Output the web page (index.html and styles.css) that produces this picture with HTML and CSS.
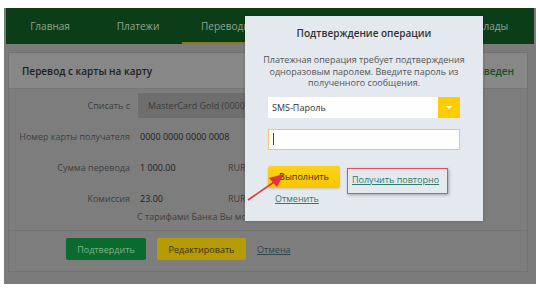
FILE: index.html
```html
<!DOCTYPE html>
<html lang="ru">
<head>
    <meta charset="UTF-8">
    <meta name="viewport" content="width=device-width, initial-scale=1.0">
    <title>Перевод с карты на карту</title>
    <link rel="stylesheet" href="styles.css">
</head>
<body>
    <div class="screen">
        <!-- Меню -->
        <nav class="topnav">
            <a class="tab">Главная</a>
            <a class="tab">Платежи</a>
            <a class="tab active">Переводы</a>
            <a class="tab"></a>
            <a class="tab"></a>
            <a class="tab">Вклады</a>
        </nav>

        <!-- Форма перевода (под затемнением) -->
        <div class="panel">
            <div class="panel-head">
                <span>Перевод с карты на карту</span>
                <span class="status">Введен</span>
            </div>
            <div class="panel-body">
                <div class="row">
                    <span class="label">Списать с</span>
                    <span class="select-dark">MasterCard Gold (0000 1</span>
                </div>
                <div class="row">
                    <span class="label">Номер карты получателя</span>
                    <span class="value">0000 0000 0000 0008</span>
                </div>
                <div class="row">
                    <span class="label">Сумма перевода</span>
                    <span class="value amount">1 000.00</span>
                    <span class="currency">RUR</span>
                </div>
                <div class="row">
                    <span class="label">Комиссия</span>
                    <span class="value amount">23.00</span>
                    <span class="currency">RUR</span>
                </div>
                <div class="tariffs">С тарифами Банка Вы мо</div>
            </div>
            <div class="panel-foot">
                <button class="btn btn-green">Подтвердить</button>
                <button class="btn btn-olive">Редактировать</button>
                <a class="link-dark">Отмена</a>
            </div>
        </div>

        <!-- Окно подтверждения -->
        <div class="modal">
            <div class="modal-title">Подтверждение операции</div>
            <p class="modal-text">Платежная операция требует подтверждения<br>одноразовым паролем. Введите пароль из<br>полученного сообщения.</p>
            <div class="select">
                <span>SMS-Пароль</span>
                <span class="select-btn"><span class="caret"></span></span>
            </div>
            <div class="input"><span class="cursor"></span></div>
            <div class="actions">
                <button class="btn btn-yellow">Выполнить</button>
                <span class="mark"><a class="link">Получить повторно</a></span>
            </div>
            <a class="link cancel">Отменить</a>
        </div>

        <svg class="arrow" width="532" height="276" viewBox="0 0 532 276">
            <line x1="244" y1="192" x2="273" y2="172" stroke="#e2333b" stroke-width="1.6"/>
            <polygon points="280,166 265,170 273,179" fill="#e2333b"/>
        </svg>
    </div>
</body>
</html>
```

FILE: styles.css
```css
/* Базовые стили */
body {
    margin: 0;
    background-color: #ffffff;
    font-family: 'Open Sans', 'DejaVu Sans', sans-serif;
}

.screen {
    position: relative;
    width: 528px;
    height: 276px;
    margin: 8px 4px 0 4px;
    padding: 0 2px;
    background-color: #7b7b7b;
}

/* Меню */
.topnav {
    display: flex;
    height: 36px;
    background-color: #0b3e18;
}

.tab {
    position: relative;
    width: 90px;
    text-align: center;
    line-height: 36px;
    font-size: 10px;
    color: #8fa593;
}

.tab.active::after {
    content: "";
    position: absolute;
    left: 0;
    right: 0;
    bottom: 0;
    height: 2px;
    background-color: #8c7a12;
}

/* Панель формы */
.panel {
    width: 518px;
    height: 218px;
    margin: 8px 0 0 2px;
    border: 1px solid #727272;
    background-color: #7d7d7d;
}

.panel-head {
    display: flex;
    justify-content: space-between;
    align-items: center;
    height: 35px;
    padding: 0 13px 0 13px;
    background-color: #878787;
    border-bottom: 1px solid #767676;
    font-size: 10px;
    font-weight: 600;
    color: #1e1e1e;
}

.panel-head .status {
    color: #16501f;
    font-weight: 600;
}

.panel-body {
    padding-top: 4px;
    font-size: 9px;
    white-space: nowrap;
}

.row {
    display: flex;
    align-items: center;
    height: 25px;
    margin-bottom: 6px;
}

.label {
    width: 121px;
    margin-right: 8px;
    text-align: right;
    color: #3e3e3e;
}

.value {
    padding-left: 2px;
    color: #1c1c1c;
}

.amount {
    width: 88px;
}

.currency {
    color: #3e3e3e;
}

.select-dark {
    width: 112px;
    height: 25px;
    line-height: 25px;
    padding-left: 10px;
    background-color: #6e6e6e;
    color: #3c3c3c;
}

.tariffs {
    margin: -6px 0 0 128px;
    line-height: 12px;
    color: #3e3e3e;
}

.panel-foot {
    display: flex;
    align-items: center;
    gap: 11px;
    margin-top: 7px;
    padding: 7px 0 0 57px;
    border-top: 1px solid #747474;
}

.btn {
    height: 22px;
    border: none;
    border-radius: 2px;
    font-family: inherit;
    font-size: 9px;
    padding: 0;
}

.btn-green {
    width: 80px;
    background-color: #0b6a2e;
    color: #7fb48d;
}

.btn-olive {
    width: 89px;
    background-color: #b59b05;
    color: #3a3000;
}

.link-dark {
    font-size: 9px;
    color: #2d4750;
    text-decoration: underline;
}

/* Окно подтверждения */
.modal {
    position: absolute;
    left: 241px;
    top: 8px;
    width: 192px;
    height: 205px;
    padding: 0 23px;
    background-color: #e3e9ef;
    box-shadow: 0 0 3px rgba(0, 0, 0, 0.25);
    font-size: 9px;
    white-space: nowrap;
}

.modal-title {
    margin-top: 10px;
    line-height: 14px;
    text-align: center;
    font-size: 10px;
    font-weight: 600;
    color: #333333;
}

.modal-text {
    margin: 14px -10px 0;
    line-height: 11.5px;
    text-align: center;
    color: #555555;
}

.select {
    display: flex;
    justify-content: space-between;
    align-items: center;
    height: 21px;
    margin-top: 8px;
    padding-left: 4px;
    background-color: #ffffff;
    color: #333333;
}

.select-btn {
    display: flex;
    align-items: center;
    justify-content: center;
    width: 22px;
    height: 21px;
    background-color: #ffcc00;
}

.caret {
    width: 0;
    height: 0;
    border-left: 3px solid transparent;
    border-right: 3px solid transparent;
    border-top: 3px solid #ffffff;
}

.input {
    display: flex;
    align-items: center;
    height: 19px;
    margin-top: 11px;
    padding-left: 4px;
    background-color: #ffffff;
    border: 1px solid #f2c66a;
}

.cursor {
    width: 1px;
    height: 12px;
    background-color: #444444;
}

.actions {
    display: flex;
    align-items: flex-start;
    gap: 7px;
    height: 22px;
    margin-top: 16px;
}

.btn-yellow {
    width: 72px;
    background: linear-gradient(#ffd21a, #f7c500);
    color: #2a2a2a;
    box-shadow: 0 1px 2px rgba(0, 0, 0, 0.15);
}

.mark {
    margin-top: 2px;
    padding: 4px 8px 7px 4px;
    border: 1.5px solid #e0505e;
    box-shadow: 1px 1px 3px rgba(0, 0, 0, 0.3);
}

.link {
    color: #2e7a6b;
    text-decoration: underline;
}

.cancel {
    display: block;
    margin: 5px 0 0 7px;
    line-height: 12px;
}

.arrow {
    position: absolute;
    left: 0;
    top: 0;
    pointer-events: none;
}
```
